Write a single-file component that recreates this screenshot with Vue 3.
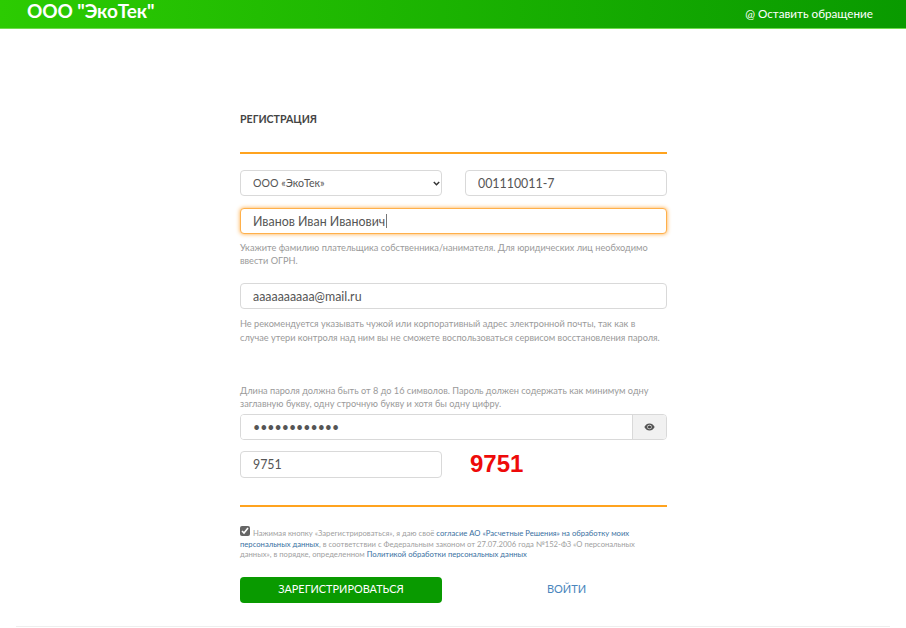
<template>
  <div class="page">
    <header class="topbar">
      <div class="brand">ООО "ЭкоТек"</div>
      <a class="contact">@ Оставить обращение</a>
    </header>

    <main class="form">
      <h1 class="title">РЕГИСТРАЦИЯ</h1>
      <div class="rule first"></div>

      <div class="two-cols">
        <div class="select-wrap">
          <select class="field select">
            <option>ООО «ЭкоТек»</option>
          </select>
          <svg class="chevron" width="7" height="5" viewBox="0 0 7 5">
            <path d="M0.800 1l2.700 2.700L6.200 1" fill="none" stroke="#333" stroke-width="1.500" />
          </svg>
        </div>
        <input class="field" type="text" value="001110011-7" />
      </div>

      <div class="name-wrap">
        <input class="field focused" type="text" value="Иванов Иван Иванович" />
        <span class="caret"></span>
      </div>
      <p class="hint name-hint">
        Укажите фамилию плательщика собственника/нанимателя. Для юридических лиц необходимо ввести ОГРН.
      </p>

      <input class="field email" type="text" value="aaaaaaaaaa@mail.ru" />
      <p class="hint email-hint">
        Не рекомендуется указывать чужой или корпоративный адрес электронной почты, так как в<br />
        случае утери контроля над ним вы не сможете воспользоваться сервисом восстановления пароля.
      </p>

      <p class="hint pass-hint">
        Длина пароля должна быть от 8 до 16 символов. Пароль должен содержать как минимум одну заглавную букву, одну строчную букву и хотя бы одну цифру.
      </p>
      <div class="pass-group">
        <input class="pass-input" type="password" value="123456789012" />
        <button class="eye-btn" type="button" aria-label="Показать пароль">
          <svg width="11" height="8" viewBox="0 0 24 18">
            <path d="M12 1C6.500 1 2.300 4.800 0.500 9c1.800 4.200 6 8 11.500 8s9.700-3.800 11.500-8C21.700 4.800 17.500 1 12 1z" fill="#555" />
            <circle cx="12" cy="9" r="5" fill="#e4e4e4" />
            <circle cx="12" cy="9" r="3.500" fill="#444" />
          </svg>
        </button>
      </div>

      <div class="captcha-row">
        <input class="field" type="text" value="9751" />
        <div class="captcha">9751</div>
      </div>

      <div class="rule second"></div>

      <p class="consent">
        <input class="check" type="checkbox" checked />
        Нажимая кнопку «Зарегистрироваться», я даю своё
        <a>согласие АО «Расчетные Решения» на обработку моих персональных данных</a>,
        в соответствии с Федеральным законом от 27.07.2006 года №152-ФЗ «О персональных данных», в порядке, определенном
        <a>Политикой обработки персональных данных</a>
      </p>

      <div class="actions">
        <button class="submit" type="button">ЗАРЕГИСТРИРОВАТЬСЯ</button>
        <a class="login">ВОЙТИ</a>
      </div>
    </main>

    <div class="bottom-line"></div>
  </div>
</template>

<script setup>
</script>

<style>
html, body {
  margin: 0;
  background: #fff;
}
</style>

<style scoped>
.page {
  width: 906px;
  height: 628px;
  overflow: hidden;
  font-family: Lato, "Open Sans", "Noto Sans", sans-serif;
  color: #555;
  background: #fff;
}

.topbar {
  height: 28px;
  border-bottom: 1px solid #6fdc4c;
  background: linear-gradient(90deg, #2ccb02, #099a00);
  display: flex;
  justify-content: space-between;
  padding: 0 33px 0 27px;
  color: #fff;
}

.brand {
  margin-top: 1px;
  font-size: 19px;
  font-weight: 700;
  line-height: 20px;
  letter-spacing: -0.1px;
}

.contact {
  font-size: 11.700px;
  line-height: 26px;
}

.form {
  width: 427px;
  margin: 0 auto 0 240px;
  display: flex;
  flex-direction: column;
}

.title {
  margin: 84px 0 0;
  font-size: 10.600px;
  line-height: 13px;
  font-weight: 700;
  color: #444;
}

.rule {
  height: 2px;
  background: #ffa31f;
}

.rule.first {
  margin-top: 26px;
}

.two-cols {
  margin-top: 16px;
  display: grid;
  grid-template-columns: 202px 202px;
  justify-content: space-between;
}

.field {
  box-sizing: border-box;
  width: 100%;
  height: 26px;
  padding: 0 12px;
  border: 1px solid #d9d9d9;
  border-radius: 4px;
  background: #fff;
  font: 12.400px Lato, "Open Sans", "Noto Sans", sans-serif;
  color: #555;
  outline: none;
}

.select-wrap {
  position: relative;
}

.select {
  display: block;
  appearance: none;
  font-size: 10.600px;
  color: #555;
}

.chevron {
  position: absolute;
  right: 2px;
  top: 11px;
}

.name-wrap {
  position: relative;
  margin-top: 12px;
}

.focused {
  display: block;
  border-color: #ffb04a;
  box-shadow: 0 0 4px rgba(255, 160, 40, 0.9);
}

.caret {
  position: absolute;
  left: 146px;
  top: 6px;
  width: 1px;
  height: 14px;
  background: #777;
}

.hint {
  margin: 0;
  font-size: 9.200px;
  line-height: 13px;
  color: #9a9a9a;
}

.name-hint {
  margin-top: 7px;
}

.email {
  margin-top: 16px;
}

.email-hint {
  margin-top: 8px;
  line-height: 13.500px;
}

.pass-hint {
  margin-top: 40px;
}

.pass-group {
  margin-top: 4px;
  display: flex;
  height: 26px;
  border: 1px solid #d9d9d9;
  border-radius: 4px;
  box-sizing: border-box;
  overflow: hidden;
}

.pass-input {
  flex: 1;
  min-width: 0;
  border: 0;
  padding: 0 12px;
  font: 12.400px Lato, "Open Sans", "Noto Sans", sans-serif;
  color: #555;
  outline: none;
}

.eye-btn {
  width: 34px;
  padding: 0;
  border: 0;
  border-left: 1px solid #d9d9d9;
  background: #f1f1f1;
  display: flex;
  align-items: center;
  justify-content: center;
}

.captcha-row {
  margin-top: 10px;
  display: flex;
  align-items: center;
}

.captcha-row .field {
  width: 202px;
  height: 27px;
}

.captcha {
  margin-left: 28px;
  font: 700 24px "Liberation Sans", Arial, sans-serif;
  color: #ee0a0a;
}

.rule.second {
  margin-top: 27px;
}

.consent {
  margin: 19px 0 0;
  font-size: 7.670px;
  line-height: 10.700px;
  color: #a0a0a0;
}

.consent a {
  color: #39709f;
}

.check {
  width: 10px;
  height: 10px;
  margin: 0 1px 0 0;
  accent-color: #666;
  vertical-align: 0;
}

.actions {
  margin-top: 17px;
  display: grid;
  grid-template-columns: 202px 1fr;
  align-items: center;
}

.submit {
  height: 26px;
  padding: 0 0 3px;
  border: 0;
  border-radius: 4px;
  background: #099a00;
  color: #fff;
  font: 10.900px Lato, "Open Sans", "Noto Sans", sans-serif;
}

.login {
  padding: 0 0 3px 24px;
  text-align: center;
  font-size: 11px;
  color: #4a86bd;
}

.bottom-line {
  height: 1px;
  margin: 23px 16px 0;
  background: #eee;
}
</style>
